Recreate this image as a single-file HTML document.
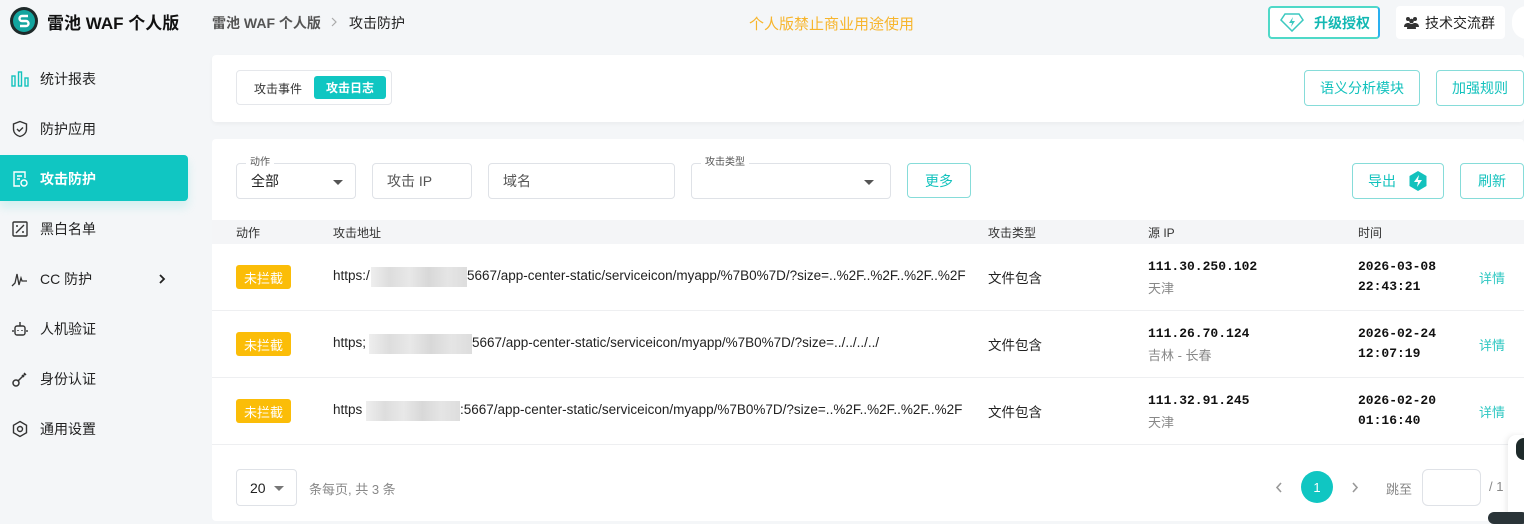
<!DOCTYPE html>
<html><head><meta charset="utf-8">
<style>
*{box-sizing:border-box;margin:0;padding:0}
body{width:1524px;height:521px;overflow:hidden;background:#f4f6f8;font-family:"Liberation Sans","Noto Sans CJK SC",sans-serif;color:#222;position:relative;font-size:14px}
.a{position:absolute}
.nav{position:absolute;left:0;width:188px;height:46px;display:flex;align-items:center;font-size:14px;color:#222}
.nav svg{position:absolute;left:11px;width:18px;height:18px}
.nav span{position:absolute;left:40px}
.btn{position:absolute;border:1px solid #86dcd9;border-radius:4px;color:#13c2bd;display:flex;align-items:center;justify-content:center;font-size:14px;background:#fff}
.inp{position:absolute;border:1px solid #dfe2e7;border-radius:4px;background:#fff;display:flex;align-items:center;padding-left:14px;font-size:14px}
.lbl{position:absolute;top:-8px;left:9px;background:#fff;padding:0 4px;font-size:10px;color:#555;line-height:14px}
.tri{position:absolute;width:0;height:0;border-left:5px solid transparent;border-right:5px solid transparent;border-top:5px solid #555}
.th{position:absolute;top:224px;font-size:12px;color:#333}
.tag{position:absolute;left:236px;width:55px;height:24px;background:#fbbd08;color:#fff;border-radius:3px;font-size:13px;display:flex;align-items:center;justify-content:center}
.url{position:absolute;left:333px;font-size:13.5px;color:#222}
.blur{position:absolute;height:20px;background:linear-gradient(90deg,#eee,#ddd,#e8e8e8,#d8d8d8,#e5e5e5,#ddd)}
.mono{font-family:"Liberation Mono",monospace;font-size:13px;font-weight:bold;color:#111}
.sub{font-size:13px;color:#888;position:absolute}
.det{position:absolute;left:1479px;color:#2ec7c2;font-size:13px}
.row{position:absolute;left:212px;width:1312px;border-bottom:1px solid #eeeff1}
</style></head><body>
<!-- header -->
<svg class="a" style="left:10px;top:7px" width="28" height="28" viewBox="0 0 28 28"><circle cx="14" cy="14" r="14" fill="#1e2a2a"/><circle cx="14" cy="14" r="11" fill="#13a59f"/><path d="M18 9H12a2.5 2.5 0 0 0 0 5h4a2.5 2.5 0 0 1 0 5H10" stroke="#fff" stroke-width="2.4" fill="none"/></svg>
<div class="a" style="left:47px;top:9px;font-size:17px;font-weight:bold;color:#111">雷池 WAF 个人版</div>
<div class="a" style="left:212px;top:13px;font-size:14px;color:#555;font-weight:bold">雷池 WAF 个人版</div>
<svg class="a" style="left:330px;top:17px" width="8" height="10" viewBox="0 0 8 10"><path d="M2 1l4 4-4 4" stroke="#aaa" fill="none" stroke-width="1.2"/></svg>
<div class="a" style="left:349px;top:13px;font-size:14px;color:#222">攻击防护</div>
<div class="a" style="left:749px;top:13px;font-size:15px;color:#f7b52c">个人版禁止商业用途使用</div>
<div class="a" style="left:1268px;top:6px;width:112px;height:33px;border:2px solid #4fd9c8;border-right-color:#2ab0f0;border-radius:4px;background:#fff;display:flex;align-items:center;padding-left:44px;font-weight:bold;color:#13b8b3;font-size:14px">升级授权</div>
<svg class="a" style="left:1280px;top:12px" width="24" height="20" viewBox="0 0 24 20"><path d="M5 2h14l4 6-11 11L1 8z" fill="none" stroke="#3cc9c0" stroke-width="1.5"/><path d="M13 5l-4 6h3l-1 4 4-6h-3z" fill="#3cc9c0"/></svg>
<div class="a" style="left:1396px;top:6px;width:109px;height:33px;background:#fff;border-radius:4px;display:flex;align-items:center;padding-left:29px;font-size:14px;color:#222">技术交流群</div>
<svg class="a" style="left:1404px;top:16px" width="15" height="13" viewBox="0 0 15 13"><circle cx="4" cy="3" r="2" fill="#333"/><circle cx="11" cy="3" r="2" fill="#333"/><circle cx="7.5" cy="5" r="2.3" fill="#333"/><path d="M0 11c0-3 2-4 4-4s4 1 4 4zM7 11c0-3 2-4 4-4s4 1 4 4z" fill="#333"/><path d="M3 13c0-4 2-5 4.5-5s4.5 1 4.5 5z" fill="#333"/></svg>
<div class="a" style="left:1512px;top:6px;width:30px;height:33px;background:#fff;border-radius:16px"></div>
<!-- sidebar -->
<div class="a" style="left:0;top:155px;width:188px;height:46px;background:#10c6c2;border-radius:0 4px 4px 0;box-shadow:0 6px 10px rgba(16,198,194,.15)"></div>
<div class="nav" style="top:56px"><svg viewBox="0 0 18 18" fill="none" stroke="#13c2bd" stroke-width="1.4"><rect x="1" y="6" width="3" height="10"/><rect x="7.5" y="2" width="3" height="14"/><rect x="14" y="8" width="3" height="8"/></svg><span>统计报表</span></div>
<div class="nav" style="top:106px"><svg viewBox="0 0 18 18" fill="none" stroke="#333" stroke-width="1.4"><path d="M9 1.5l6.5 2.5v5c0 4-3 6.5-6.5 7.5C5.5 15.5 2.5 13 2.5 9V4z"/><path d="M6 9l2.2 2.2L12 7.5"/></svg><span>防护应用</span></div>
<div class="nav" style="top:156px;color:#fff;font-weight:bold"><svg viewBox="0 0 18 18" fill="none" stroke="#fff" stroke-width="1.4"><path d="M14 8V2H3v14h6"/><path d="M6 6h5M6 9h3"/><circle cx="13" cy="13" r="3"/></svg><span>攻击防护</span></div>
<div class="nav" style="top:206px"><svg viewBox="0 0 18 18" fill="none" stroke="#333" stroke-width="1.4"><rect x="2" y="2" width="14" height="14" rx="1"/><path d="M5 13l8-8M5 6h2M11 12h2"/></svg><span>黑白名单</span></div>
<div class="nav" style="top:256px"><svg viewBox="0 0 18 18" fill="none" stroke="#333" stroke-width="1.3"><path d="M1 16l3-3 2-9 2 11 2-7 1 3h5"/></svg><span>CC 防护</span><svg style="left:158px;width:8px;height:10px" viewBox="0 0 8 10"><path d="M2 1l4 4-4 4" stroke="#222" fill="none" stroke-width="1.8"/></svg></div>
<div class="nav" style="top:306px"><svg viewBox="0 0 18 18" fill="none" stroke="#333" stroke-width="1.4"><rect x="4" y="6" width="10" height="9" rx="2"/><path d="M9 2v4M2 10v2M16 10v2M7 10v1M11 10v1"/></svg><span>人机验证</span></div>
<div class="nav" style="top:356px"><svg viewBox="0 0 18 18" fill="none" stroke="#333" stroke-width="1.5"><circle cx="5" cy="13" r="3"/><path d="M7 11l7-7M11 5l2 2M13 3l2 2"/></svg><span>身份认证</span></div>
<div class="nav" style="top:406px"><svg viewBox="0 0 18 18" fill="none" stroke="#333" stroke-width="1.4"><path d="M9 1.5l6.5 3.75v7.5L9 16.5 2.5 12.75v-7.5z"/><circle cx="9" cy="9" r="2.5"/></svg><span>通用设置</span></div>
<!-- panel 1 -->
<div class="a" style="left:212px;top:55px;width:1312px;height:67px;background:#fff;border-radius:4px;box-shadow:0 2px 4px rgba(0,0,0,.04)"></div>
<div class="a" style="left:236px;top:70px;width:156px;height:35px;border:1px solid #e5e7eb;border-radius:4px"></div>
<div class="a" style="left:254px;top:80px;font-size:12px;color:#333">攻击事件</div>
<div class="a" style="left:314px;top:76px;width:72px;height:23px;background:#10c6c2;border-radius:3px;color:#fff;font-size:12px;font-weight:bold;display:flex;align-items:center;justify-content:center">攻击日志</div>
<div class="btn" style="left:1304px;top:70px;width:116px;height:36px">语义分析模块</div>
<div class="btn" style="left:1436px;top:70px;width:88px;height:36px">加强规则</div>
<!-- panel 2 -->
<div class="a" style="left:212px;top:139px;width:1312px;height:382px;background:#fff;border-radius:4px"></div>
<div class="inp" style="left:236px;top:163px;width:120px;height:36px">全部<div class="lbl">动作</div><div class="tri" style="left:96px;top:16px"></div></div>
<div class="inp" style="left:372px;top:163px;width:100px;height:36px;color:#555">攻击 IP</div>
<div class="inp" style="left:488px;top:163px;width:187px;height:36px;color:#555">域名</div>
<div class="inp" style="left:691px;top:163px;width:200px;height:36px"><div class="lbl">攻击类型</div><div class="tri" style="left:172px;top:16px"></div></div>
<div class="btn" style="left:907px;top:163px;width:64px;height:35px">更多</div>
<div class="btn" style="left:1352px;top:163px;width:92px;height:36px;justify-content:flex-start;padding-left:15px">导出</div>
<svg class="a" style="left:1408px;top:170px" width="20" height="22" viewBox="0 0 20 22"><path d="M10 1l8.5 5v10L10 21 1.5 16V6z" fill="#13c2bd"/><path d="M11 5l-5 7h4l-1 5 5-7h-4z" fill="#fff"/></svg>
<div class="btn" style="left:1460px;top:163px;width:64px;height:36px">刷新</div>
<!-- table -->
<div class="a" style="left:212px;top:220px;width:1312px;height:24px;background:#f4f5f7"></div>
<div class="th" style="left:236px">动作</div><div class="th" style="left:333px">攻击地址</div><div class="th" style="left:988px">攻击类型</div><div class="th" style="left:1148px">源 IP</div><div class="th" style="left:1358px">时间</div>
<div class="row" style="top:244px;height:67px"></div>
<div class="row" style="top:311px;height:67px"></div>
<div class="row" style="top:378px;height:67px"></div>

<div class="tag" style="top:265px">未拦截</div>
<div class="url" style="top:268px">https:/</div><div class="blur" style="left:371px;top:267px;width:96px"></div><div class="url" style="left:467px;top:268px">5667/app-center-static/serviceicon/myapp/%7B0%7D/?size=..%2F..%2F..%2F..%2F</div>
<div class="url" style="left:988px;top:267px">文件包含</div>
<div class="a mono" style="left:1148px;top:259px">111.30.250.102</div><div class="sub" style="left:1148px;top:278px">天津</div>
<div class="a mono" style="left:1358px;top:259px">2026-03-08</div><div class="a mono" style="left:1358px;top:279px">22:43:21</div>
<div class="det" style="top:268px">详情</div>

<div class="tag" style="top:332px">未拦截</div>
<div class="url" style="top:335px">https;</div><div class="blur" style="left:369px;top:334px;width:103px"></div><div class="url" style="left:472px;top:335px">5667/app-center-static/serviceicon/myapp/%7B0%7D/?size=../../../../</div>
<div class="url" style="left:988px;top:334px">文件包含</div>
<div class="a mono" style="left:1148px;top:326px">111.26.70.124</div><div class="sub" style="left:1148px;top:345px">吉林 - 长春</div>
<div class="a mono" style="left:1358px;top:326px">2026-02-24</div><div class="a mono" style="left:1358px;top:346px">12:07:19</div>
<div class="det" style="top:335px">详情</div>

<div class="tag" style="top:399px">未拦截</div>
<div class="url" style="top:402px">https</div><div class="blur" style="left:366px;top:401px;width:94px"></div><div class="url" style="left:460px;top:402px">:5667/app-center-static/serviceicon/myapp/%7B0%7D/?size=..%2F..%2F..%2F..%2F</div>
<div class="url" style="left:988px;top:401px">文件包含</div>
<div class="a mono" style="left:1148px;top:393px">111.32.91.245</div><div class="sub" style="left:1148px;top:412px">天津</div>
<div class="a mono" style="left:1358px;top:393px">2026-02-20</div><div class="a mono" style="left:1358px;top:413px">01:16:40</div>
<div class="det" style="top:402px">详情</div>
<!-- pagination -->
<div class="inp" style="left:236px;top:469px;width:61px;height:37px;padding-left:13px">20<div class="tri" style="left:37px;top:16px;border-top-color:#777"></div></div>
<div class="a" style="left:309px;top:479px;font-size:13px;color:#888">条每页, 共 3 条</div>
<svg class="a" style="left:1275px;top:482px" width="8" height="11" viewBox="0 0 8 11"><path d="M6 1L2 5.5 6 10" stroke="#999" fill="none" stroke-width="1.6"/></svg>
<div class="a" style="left:1301px;top:471px;width:32px;height:32px;border-radius:50%;background:#10c6c2;color:#fff;display:flex;align-items:center;justify-content:center;font-size:13px">1</div>
<svg class="a" style="left:1351px;top:482px" width="8" height="11" viewBox="0 0 8 11"><path d="M2 1l4 4.5L2 10" stroke="#999" fill="none" stroke-width="1.6"/></svg>
<div class="a" style="left:1386px;top:479px;font-size:13px;color:#888">跳至</div>
<div class="a" style="left:1422px;top:469px;width:59px;height:37px;border:1px solid #dfe2e7;border-radius:6px"></div>
<div class="a" style="left:1489px;top:479px;font-size:13px;color:#888">/ 1</div>
<div class="a" style="left:1508px;top:435px;width:30px;height:86px;background:#fff;border-radius:8px 0 0 0;box-shadow:-2px 0 6px rgba(0,0,0,.08)"></div>
<div class="a" style="left:1516px;top:438px;width:16px;height:22px;background:#1e2a2a;border-radius:8px 0 0 8px"></div>
<div class="a" style="left:1488px;top:512px;width:40px;height:12px;background:#2a3438;border-radius:6px"></div>
</body></html>
